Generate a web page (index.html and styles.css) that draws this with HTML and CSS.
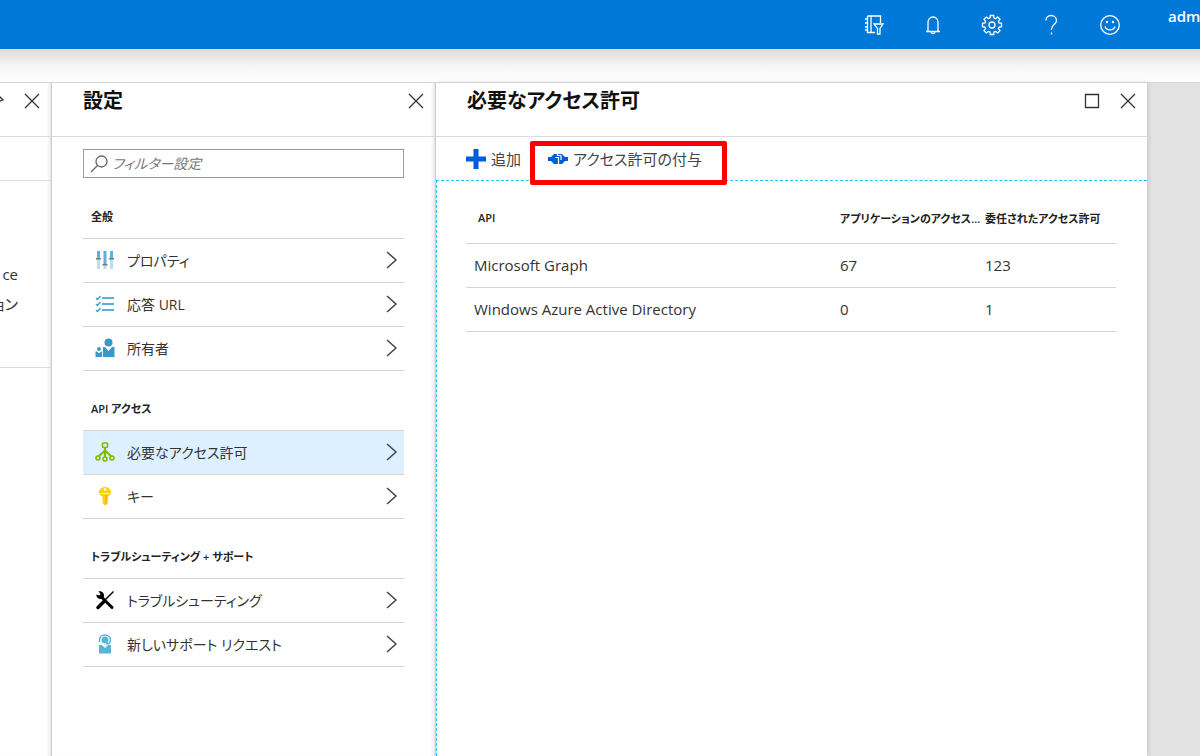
FILE: index.html
```
<!DOCTYPE html>
<html lang="ja">

<head>
    <meta charset="UTF-8">
    <meta name="viewport" content="width=device-width, initial-scale=1.0">
    <title>必要なアクセス許可</title>
    <link rel="stylesheet" href="styles.css">
</head>

<body>
    <header class="topbar">
        <button class="top-btn" aria-label="フィルター">
            <svg width="22" height="22" viewBox="0 0 22 22">
                <path d="M4.500 2H17.500V9M4.500 2V18.500H12M8 2V18.500M2 5H4.500M2 9H4.500M2 13H4.500M2 16H4.500" />
                <path d="M11 10H20L17 14.500V20H14.500V14.500Z" />
            </svg>
        </button>
        <button class="top-btn" aria-label="通知">
            <svg width="22" height="22" viewBox="0 0 22 22">
                <path d="M4 17.500H18M6 17.500V8.500C6 5.500 8 3 11 3S16 5.500 16 8.500V17.500M9 18C9 20 13 20 13 18" />
            </svg>
        </button>
        <button class="top-btn" aria-label="設定">
            <svg width="22" height="22" viewBox="0 0 22 22">
                <path d="M9.300 1.500H12.700L13 4L14.700 4.700L16.700 3L19 5.300L17.400 7.300L18 9L20.500 9.300V12.700L18 13L17.400 14.700L19 16.700L16.700 19L14.700 17.400L13 18L12.700 20.500H9.300L9 18L7.300 17.400L5.300 19L3 16.700L4.600 14.700L4 13L1.500 12.700V9.300L4 9L4.600 7.300L3 5.300L5.300 3L7.300 4.600L9 4Z" />
                <circle cx="11" cy="11" r="3" />
            </svg>
        </button>
        <button class="top-btn" aria-label="ヘルプ">
            <svg width="22" height="22" viewBox="0 0 22 22">
                <path d="M6 6.500C6 3.500 8 1.500 11 1.500S16.500 3.500 16.500 6.500C16.500 10.500 11.500 10.500 11.500 15V16M11.500 18.500V20.500" />
            </svg>
        </button>
        <button class="top-btn" aria-label="フィードバック">
            <svg width="22" height="22" viewBox="0 0 22 22">
                <circle cx="11" cy="11" r="9.300" />
                <path d="M6 12.500C7.500 17 14.500 17 16 12.500" />
                <circle class="eye" cx="8" cy="8" r="1.200" />
                <circle class="eye" cx="14" cy="8" r="1.200" />
            </svg>
        </button>
        <div class="account">adm</div>
    </header>

    <div class="shade"></div>

    <main class="blades">
        <!-- Previous blade, mostly scrolled out -->
        <section class="blade blade-app">
            <div class="blade-header">
                <svg class="pin" width="10" height="16" viewBox="0 0 10 16">
                    <path d="M4 2L9 7L6 8L4 12" />
                </svg>
                <button class="win-btn" aria-label="閉じる">
                    <svg width="16" height="16" viewBox="0 0 16 16"><path d="M1 1L15 15M15 1L1 15" /></svg>
                </button>
            </div>
            <div class="app-bar"></div>
            <div class="app-info">
                <p>ce</p>
                <p>ョン</p>
            </div>
        </section>

        <section class="blade blade-settings">
            <div class="blade-header">
                <h2>設定</h2>
                <button class="win-btn" aria-label="閉じる">
                    <svg width="16" height="16" viewBox="0 0 16 16"><path d="M1 1L15 15M15 1L1 15" /></svg>
                </button>
            </div>
            <div class="settings-body">
                <label class="search">
                    <svg width="18" height="18" viewBox="0 0 18 18">
                        <circle cx="11.500" cy="6.500" r="5.500" />
                        <path d="M7.500 10.500L1 17" />
                    </svg>
                    <input type="text" placeholder="フィルター設定" aria-label="フィルター設定">
                </label>

                <h3>全般</h3>
                <ul class="menu">
                    <li><a href="#">
                        <svg class="icon" width="20" height="20" viewBox="0 0 20 20">
                            <path fill="#59b4d9" d="M2 1h3v7H2zM8.500 1h3v13h-3zM15 1h3v7h-3z" />
                            <path fill="#b8dff0" d="M2 9h3v10H2zM8.500 15h3v4h-3zM15 9h3v10h-3z" />
                            <path fill="#7a7a7a" d="M1 8h5v1.500H1zM7.500 14h5v1.500h-5zM14 8h5v1.500h-5z" />
                        </svg>
                        <span>プロパティ</span>
                        <svg class="chevron" width="12" height="18" viewBox="0 0 12 18"><path d="M1 1L10 9L1 17" /></svg>
                    </a></li>
                    <li><a href="#">
                        <svg class="icon" width="20" height="20" viewBox="0 0 20 20">
                            <path fill="none" stroke="#59b4d9" stroke-width="2" d="M7 4H19M7 10H19M7 16H19" />
                            <path fill="none" stroke="#3999c6" stroke-width="1.300" d="M1 4L2.500 5.500L5.500 2M1 10L2.500 11.500L5.500 8M1 16L2.500 17.500L5.500 14" />
                        </svg>
                        <span>応答 URL</span>
                        <svg class="chevron" width="12" height="18" viewBox="0 0 12 18"><path d="M1 1L10 9L1 17" /></svg>
                    </a></li>
                    <li><a href="#">
                        <svg class="icon" width="20" height="20" viewBox="0 0 20 20">
                            <g fill="#3999c6">
                                <circle cx="13.500" cy="4.500" r="4" />
                                <path d="M8 9H10L13.500 13L17 9H19.500V19H8Z" />
                                <circle cx="4" cy="11" r="2" />
                                <path d="M.5 13.500H2L4 15.500L6 13.500H7V19H.5Z" />
                            </g>
                        </svg>
                        <span>所有者</span>
                        <svg class="chevron" width="12" height="18" viewBox="0 0 12 18"><path d="M1 1L10 9L1 17" /></svg>
                    </a></li>
                </ul>

                <h3>API アクセス</h3>
                <ul class="menu">
                    <li><a href="#" class="selected">
                        <svg class="icon" width="20" height="20" viewBox="0 0 20 20">
                            <g fill="none" stroke="#7fba00" stroke-width="1.600">
                                <rect x="7.500" y="1" width="5" height="4.500" rx="1" />
                                <path stroke-width="2.200" d="M10 6V15M9.500 9L4 14M10.500 9L16 14" />
                                <circle cx="3" cy="16" r="2" />
                                <circle cx="10" cy="17" r="2" />
                                <circle cx="17" cy="16" r="2" />
                            </g>
                        </svg>
                        <span>必要なアクセス許可</span>
                        <svg class="chevron" width="12" height="18" viewBox="0 0 12 18"><path d="M1 1L10 9L1 17" /></svg>
                    </a></li>
                    <li><a href="#">
                        <svg class="icon" width="20" height="20" viewBox="0 0 20 20">
                            <path fill="#fcd116" d="M10 1C13.500 1 16 3.500 16 6C16 8 14.500 9.500 12.500 10.500V17L10 19.500L7.500 17V10.500C5.500 9.500 4 8 4 6C4 3.500 6.500 1 10 1Z" />
                            <path fill="#ffb900" d="M10 9H12.500V17L10 19.500Z" />
                            <circle cx="10" cy="3.500" r="1.300" fill="#fff" />
                            <path stroke="#fff3b0" d="M6 7.500H14" />
                        </svg>
                        <span>キー</span>
                        <svg class="chevron" width="12" height="18" viewBox="0 0 12 18"><path d="M1 1L10 9L1 17" /></svg>
                    </a></li>
                </ul>

                <h3>トラブルシューティング + サポート</h3>
                <ul class="menu">
                    <li><a href="#">
                        <svg class="icon" width="20" height="20" viewBox="0 0 20 20">
                            <path fill="none" stroke="#000" stroke-width="3" stroke-linecap="round" d="M7 7.500L17 17.500" />
                            <path d="M3.500 1.500L5.500 4L4.500 5.500L1.500 4.500C1 7.500 4 10 7 8.500L9 6.500C9.500 3.500 7 .5 3.500 1.500Z" />
                            <path fill="none" stroke="#000" stroke-width="1.500" d="M18.500 1.500L10 10" />
                            <path fill="none" stroke="#000" stroke-width="3.500" stroke-linecap="round" d="M9 11.500L3 17.500" />
                        </svg>
                        <span>トラブルシューティング</span>
                        <svg class="chevron" width="12" height="18" viewBox="0 0 12 18"><path d="M1 1L10 9L1 17" /></svg>
                    </a></li>
                    <li><a href="#">
                        <svg class="icon" width="20" height="20" viewBox="0 0 20 20">
                            <circle cx="10" cy="6" r="3.500" fill="#59b4d9" />
                            <path fill="none" stroke="#59b4d9" stroke-width="1.500" d="M4.500 8V6C4.500 3 7 1 10 1S15.500 3 15.500 6C15.500 8.500 13.500 10 11 10" />
                            <path fill="#59b4d9" d="M4 11H7L10 14L13 11H16V19.500H4Z" />
                        </svg>
                        <span>新しいサポート リクエスト</span>
                        <svg class="chevron" width="12" height="18" viewBox="0 0 12 18"><path d="M1 1L10 9L1 17" /></svg>
                    </a></li>
                </ul>
            </div>
        </section>

        <section class="blade blade-permissions">
            <div class="blade-header">
                <h2>必要なアクセス許可</h2>
                <button class="win-btn" aria-label="最大化">
                    <svg width="16" height="16" viewBox="0 0 16 16"><path d="M1.500 1.500H14.500V14.500H1.500Z" /></svg>
                </button>
                <button class="win-btn" aria-label="閉じる">
                    <svg width="16" height="16" viewBox="0 0 16 16"><path d="M1 1L15 15M15 1L1 15" /></svg>
                </button>
            </div>
            <div class="toolbar">
                <button class="tool-btn">
                    <svg width="20" height="20" viewBox="0 0 20 20"><path fill="#015cda" d="M7.500 0h5v7.500H20v5h-7.500V20h-5v-7.500H0v-5h7.500z" /></svg>
                    追加
                </button>
                <button class="tool-btn grant">
                    <svg width="20" height="20" viewBox="0 0 20 20">
                        <path fill="#015cda" d="M0 8H3L6 5H14L17 8H20V12H17L14 15H6L3 12H0Z" />
                        <path fill="none" stroke="#fff" stroke-width="1.200" d="M7.500 8.500H10.500V15.500M9.500 4.500V6.500H13V11" />
                    </svg>
                    アクセス許可の付与
                </button>
            </div>
            <div class="grid-area">
                <table>
                    <thead>
                        <tr>
                            <th>API</th>
                            <th class="col-app">アプリケーションのアクセス...</th>
                            <th class="col-delegated">委任されたアクセス許可</th>
                        </tr>
                    </thead>
                    <tbody>
                        <tr>
                            <td>Microsoft Graph</td>
                            <td>67</td>
                            <td>123</td>
                        </tr>
                        <tr>
                            <td>Windows Azure Active Directory</td>
                            <td>0</td>
                            <td>1</td>
                        </tr>
                    </tbody>
                </table>
            </div>
        </section>
    </main>
</body>

</html>
```

FILE: styles.css
```
* {
    box-sizing: border-box;
}

body {
    font-family: "Open Sans", "Noto Sans CJK JP", sans-serif;
    font-feature-settings: "palt";
    font-size: 15px;
    color: #333;
    background-color: #e3e3e3;
    display: flex;
    flex-direction: column;
    min-height: 100vh;
    margin: 0;
}

h2,
h3,
p,
ul {
    margin: 0;
    padding: 0;
}

button {
    font: inherit;
    font-feature-settings: inherit;
    color: inherit;
    background: none;
    border: none;
    padding: 0;
    cursor: pointer;
}

svg {
    display: block;
    flex: none;
}

/* Top bar */
.topbar {
    display: flex;
    justify-content: flex-end;
    height: 49px;
    background-color: #0078d7;
    color: #fff;
}

.top-btn {
    display: flex;
    align-items: center;
    justify-content: center;
    width: 59px;
}

.top-btn svg {
    fill: none;
    stroke: #fff;
    stroke-width: 1.3;
}

.top-btn .eye {
    fill: #fff;
    stroke: none;
}

.account {
    width: 61px;
    padding: 6px 0 0 29px;
    font-size: 15px;
    font-weight: 600;
    line-height: 20px;
    overflow: hidden;
}

.shade {
    height: 33px;
    background: linear-gradient(#dcdcdc, #f5f5f5 50%, #fff);
}

/* Blades */
.blades {
    display: flex;
    flex: 1;
    border-top: 1px solid #d4d4d4;
}

.blade {
    background-color: #fff;
}

.blade-header {
    display: flex;
    align-items: flex-start;
    gap: 20px;
    height: 54px;
    padding: 2px 11px 0 31px;
    border-bottom: 1px solid #dcdcdc;
}

.blade-header h2 {
    flex: 1;
    font-size: 20px;
    font-weight: 600;
    line-height: 32px;
    color: #111;
}

.win-btn {
    margin-top: 8px;
}

.win-btn svg,
.pin {
    fill: none;
    stroke: #333;
    stroke-width: 1.3;
}

.blade-app {
    flex: 0 0 52px;
    overflow: hidden;
    border-right: 1px solid #ccc;
    box-shadow: inset -4px 0 4px -3px #ddd;
}

.blade-app .blade-header {
    justify-content: flex-end;
    padding-left: 0;
}

.pin {
    margin-top: 8px;
}

.app-bar {
    height: 44px;
    border-bottom: 1px solid #dcdcdc;
}

.app-info {
    display: flex;
    flex-direction: column;
    align-items: flex-end;
    height: 187px;
    padding: 78px 33px 0 0;
    line-height: 30px;
    white-space: nowrap;
    border-bottom: 1px solid #dcdcdc;
}

.blade-settings {
    flex: 0 0 32%;
    border-right: 1px solid #ccc;
    box-shadow: inset -4px 0 4px -3px #ddd;
}

.settings-body {
    padding: 12px 31px 0 31px;
}

.search {
    display: flex;
    align-items: center;
    gap: 4px;
    height: 29px;
    margin-bottom: 1px;
    padding: 0 6px;
    border: 1px solid #999;
}

.search svg {
    fill: none;
    stroke: #666;
    stroke-width: 1.3;
}

.search input {
    flex: 1;
    min-width: 0;
    padding: 0;
    font: inherit;
    font-size: 14px;
    font-style: italic;
    font-feature-settings: inherit;
    border: none;
    outline: none;
    background: none;
}

.search input::placeholder {
    color: #777;
}

h3 {
    height: 59px;
    padding: 28px 8px 0;
    font-size: 11px;
    font-weight: 600;
    line-height: 20px;
    color: #222;
}

.menu {
    list-style: none;
    border-top: 1px solid #d4d4d4;
}

.menu a {
    display: flex;
    align-items: center;
    gap: 12px;
    height: 44px;
    padding: 0 6px 2px 12px;
    font-size: 14px;
    color: inherit;
    text-decoration: none;
    border-bottom: 1px solid #d4d4d4;
}

.menu a.selected {
    background-color: #dcf0ff;
}

.menu span {
    flex: 1;
}

.chevron {
    fill: none;
    stroke: #444;
    stroke-width: 1.5;
}

/* Permissions */
.blade-permissions {
    display: flex;
    flex: 1;
    flex-direction: column;
    min-width: 0;
    margin-right: 53px;
    box-shadow: 2px 0 4px #ccc;
}

.toolbar {
    display: flex;
    gap: 27px;
    height: 43px;
    padding: 0 30px;
}

.tool-btn {
    display: flex;
    align-items: center;
    gap: 5px;
    white-space: nowrap;
    color: #444;
}

.grant {
    position: relative;
}

/* Red frame drawn over the toolbar button */
.grant::after {
    content: "";
    position: absolute;
    inset: 4px -25px -5px -18px;
    border: 5px solid #f00;
    border-radius: 2px;
}

.grid-area {
    flex: 1;
    padding: 18px 31px 0 29px;
    border-top: 1px dashed #1fc3f3;
    border-left: 1px dashed #1fc3f3;
}

table {
    width: 100%;
    table-layout: fixed;
    border-collapse: collapse;
    text-align: left;
}

th,
td {
    height: 44px;
    padding: 0 8px;
    border-bottom: 1px solid #d4d4d4;
    white-space: nowrap;
}

th {
    padding-right: 0;
    padding-bottom: 6px;
    font-size: 11px;
    font-weight: 600;
    color: #222;
}

th:first-child {
    padding-left: 12px;
}

.col-app {
    width: 145px;
}

.col-delegated {
    width: 139px;
}
```
